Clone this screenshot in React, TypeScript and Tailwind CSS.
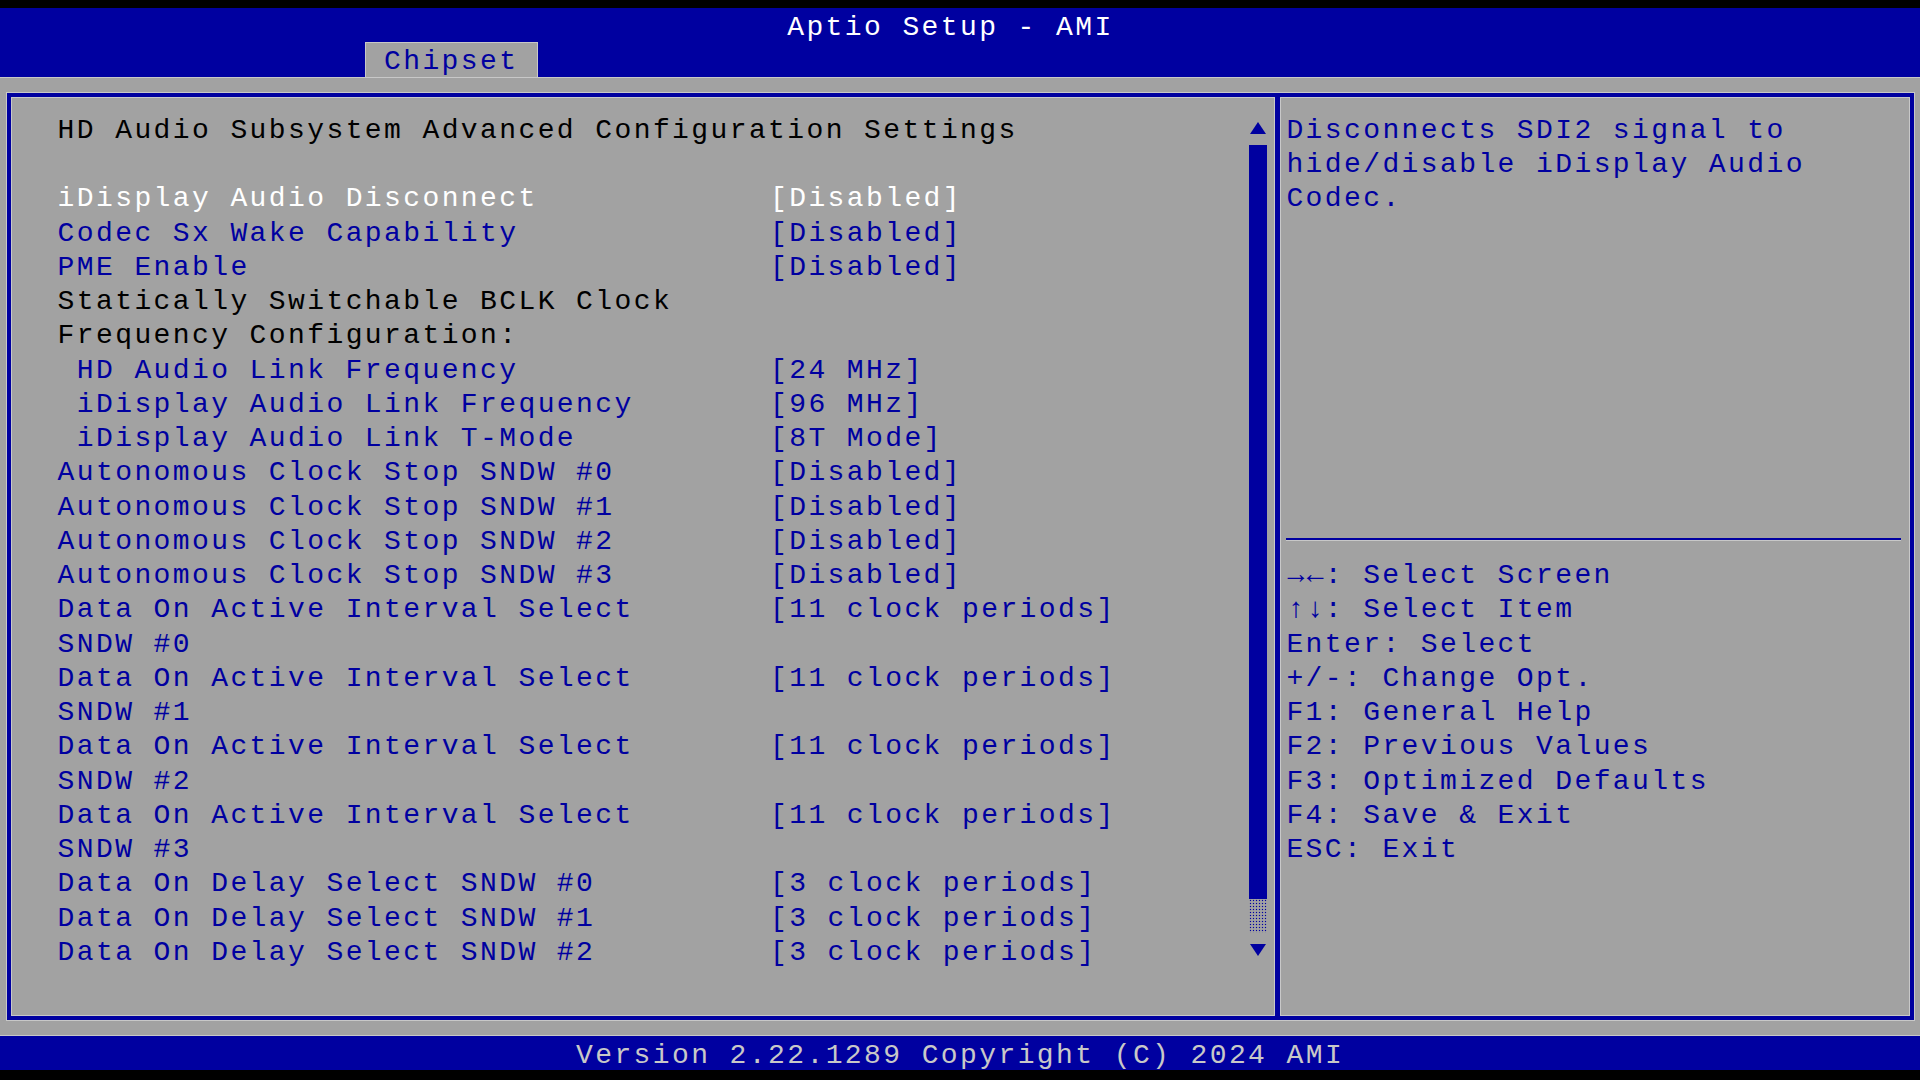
import React from "react";

type Item = { label: string; value?: string; color: "white" | "blue" | "black"; indent?: boolean };

const items: Item[] = [
  { label: "iDisplay Audio Disconnect", value: "[Disabled]", color: "white" },
  { label: "Codec Sx Wake Capability", value: "[Disabled]", color: "blue" },
  { label: "PME Enable", value: "[Disabled]", color: "blue" },
  { label: "Statically Switchable BCLK Clock", color: "black" },
  { label: "Frequency Configuration:", color: "black" },
  { label: "HD Audio Link Frequency", value: "[24 MHz]", color: "blue", indent: true },
  { label: "iDisplay Audio Link Frequency", value: "[96 MHz]", color: "blue", indent: true },
  { label: "iDisplay Audio Link T-Mode", value: "[8T Mode]", color: "blue", indent: true },
  { label: "Autonomous Clock Stop SNDW #0", value: "[Disabled]", color: "blue" },
  { label: "Autonomous Clock Stop SNDW #1", value: "[Disabled]", color: "blue" },
  { label: "Autonomous Clock Stop SNDW #2", value: "[Disabled]", color: "blue" },
  { label: "Autonomous Clock Stop SNDW #3", value: "[Disabled]", color: "blue" },
  { label: "Data On Active Interval Select", value: "[11 clock periods]", color: "blue" },
  { label: "SNDW #0", color: "blue" },
  { label: "Data On Active Interval Select", value: "[11 clock periods]", color: "blue" },
  { label: "SNDW #1", color: "blue" },
  { label: "Data On Active Interval Select", value: "[11 clock periods]", color: "blue" },
  { label: "SNDW #2", color: "blue" },
  { label: "Data On Active Interval Select", value: "[11 clock periods]", color: "blue" },
  { label: "SNDW #3", color: "blue" },
  { label: "Data On Delay Select SNDW #0", value: "[3 clock periods]", color: "blue" },
  { label: "Data On Delay Select SNDW #1", value: "[3 clock periods]", color: "blue" },
  { label: "Data On Delay Select SNDW #2", value: "[3 clock periods]", color: "blue" },
];

const colorClass = (c: Item["color"]) =>
  c === "white" ? "text-white" : c === "black" ? "text-black" : "text-[#0000a0]";

const keys: { arrows?: string[]; text: string }[] = [
  { arrows: ["→", "←"], text: ": Select Screen" },
  { arrows: ["↑", "↓"], text: ": Select Item" },
  { text: "Enter: Select" },
  { text: "+/-: Change Opt." },
  { text: "F1: General Help" },
  { text: "F2: Previous Values" },
  { text: "F3: Optimized Defaults" },
  { text: "F4: Save & Exit" },
  { text: "ESC: Exit" },
];

function Up() {
  return (
    <svg width="16" height="12" viewBox="0 0 16 12">
      <polygon points="8,0 16,12 0,12" fill="#0000a0" />
    </svg>
  );
}
function Down() {
  return (
    <svg width="16" height="12" viewBox="0 0 16 12">
      <polygon points="0,0 16,0 8,12" fill="#0000a0" />
    </svg>
  );
}

export default function App() {
  return (
    <div className="w-[1920px] h-[1080px] bg-black pt-[8px] overflow-hidden font-['Liberation_Mono',monospace] text-[28px] tracking-[2.4px] leading-[34.258px] whitespace-pre">
      {/* Header */}
      <div className="h-[68.516px] bg-[#0000a0] flex flex-col">
        <div className="h-[34.258px] pt-[3px] pl-[787.2px] text-white">Aptio Setup - AMI</div>
        <div className="h-[34.258px] flex">
          <div className="ml-[364.8px] w-[172.8px] bg-[#a2a2a2] pt-[3px] pl-[19.2px] text-[#0000a0] shadow-[inset_1px_1px_0_#c8c8c8,inset_-1px_0_0_#c8c8c8]">
            Chipset
          </div>
        </div>
      </div>

      {/* Main gray area */}
      <div className="h-[959.22px] bg-[#a2a2a2] pt-[16.5px] pl-[7px] pr-[6px] shadow-[inset_0_1px_0_#c8c8c8,inset_0_-1px_0_#c8c8c8]">
        <div className="h-[927px] border-4 border-[#0000a0] flex shadow-[0_0_0_1px_#c8c8c8,inset_0_0_0_1px_#c8c8c8]">
          {/* Left panel */}
          <div className="w-[1264px] flex pt-[13.77px]">
            <div className="w-[1237px] pl-[46.6px]">
              <div className="h-[34.258px] pt-[3px] text-black">HD Audio Subsystem Advanced Configuration Settings</div>
              <div className="h-[34.258px]" />
              {items.map((it, i) => (
                <div key={i} className={`h-[34.258px] pt-[3px] flex ${colorClass(it.color)}`}>
                  <div className={`w-[710.4px] ${it.indent ? "pl-[19.2px]" : ""}`}>{it.label}</div>
                  {it.value && <div className="pl-[2px]">{it.value}</div>}
                </div>
              ))}
            </div>
            {/* Scrollbar */}
            <div className="w-[19.2px] flex flex-col">
              <div className="h-[34.258px] flex items-center justify-center">
                <Up />
              </div>
              <div className="h-[753.68px] ml-[1px] w-[18px] bg-[#0000a0]" />
              <div className="h-[34.258px] ml-[1px] w-[18px] bg-[radial-gradient(circle,#0000a0_38%,transparent_48%)] bg-[length:3px_3px]" />
              <div className="h-[34.258px] flex items-center justify-center">
                <Down />
              </div>
            </div>
          </div>

          {/* Divider */}
          <div className="w-[5px] bg-[#0000a0] shadow-[-1px_0_0_#c8c8c8,1px_0_0_#c8c8c8]" />

          {/* Right panel */}
          <div className="flex-1 pt-[13.77px] pl-[6.4px] text-[#0000a0]">
            <div className="h-[34.258px] pt-[3px]">Disconnects SDI2 signal to</div>
            <div className="h-[34.258px] pt-[3px]">hide/disable iDisplay Audio</div>
            <div className="h-[34.258px] pt-[3px]">Codec.</div>
            <div className="h-[308.322px]" />
            <div className="h-[34.258px] flex items-center">
              <div className="w-[614.4px] h-[2px] bg-[#0000a0] shadow-[0_1px_0_#c8c8c8]" />
            </div>
            {keys.map((k, i) => (
              <div key={i} className="h-[34.258px] pt-[3px] flex">
                {k.arrows &&
                  k.arrows.map((a, j) => (
                    <span key={j} className="w-[19.2px] text-center font-bold tracking-normal">
                      {a}
                    </span>
                  ))}
                <span>{k.text}</span>
              </div>
            ))}
          </div>
        </div>
      </div>

      {/* Footer */}
      <div className="h-[34.258px] bg-[#0000a0] pt-[3px] pl-[576px] text-[#c8c8c8]">
        Version 2.22.1289 Copyright (C) 2024 AMI
      </div>
    </div>
  );
}
